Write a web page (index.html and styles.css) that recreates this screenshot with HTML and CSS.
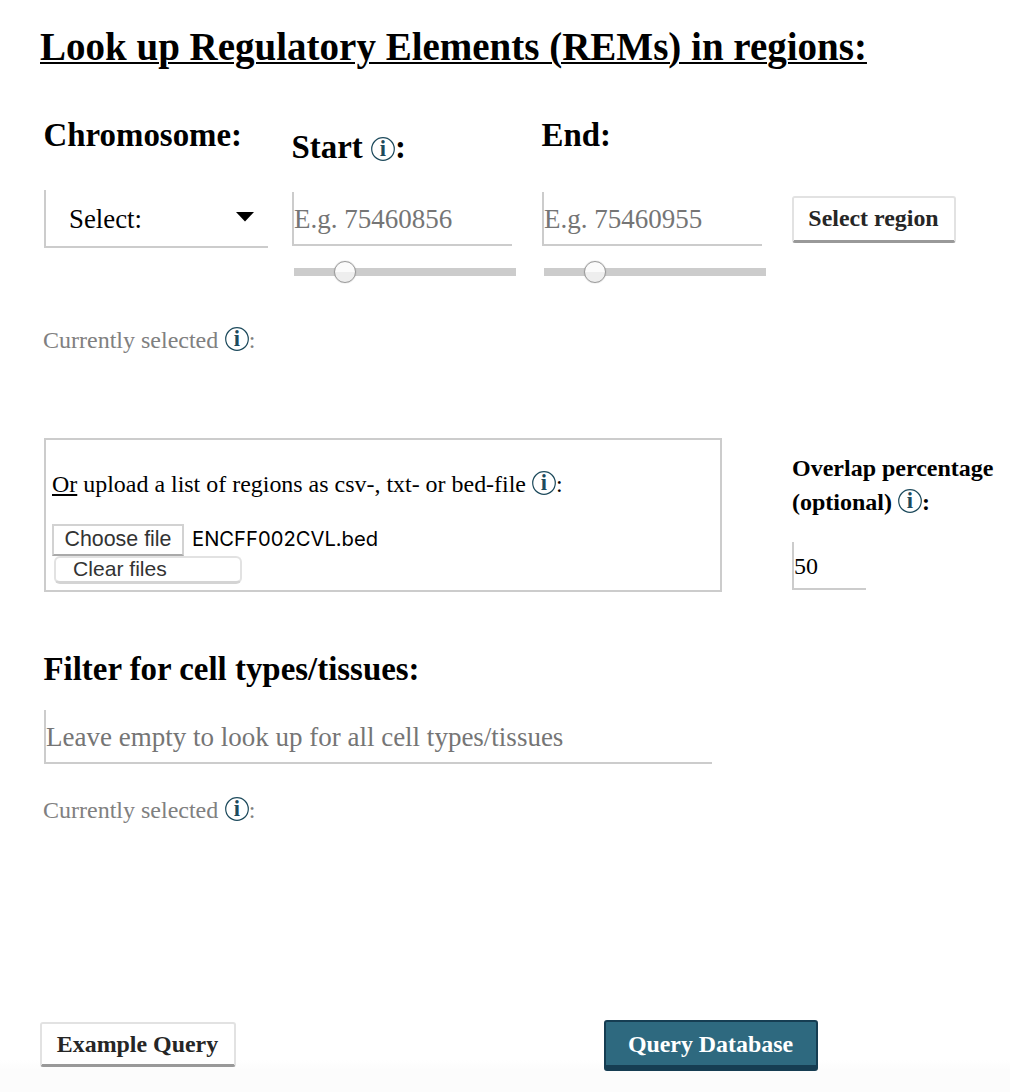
FILE: index.html
```html
<!DOCTYPE html>
<html lang="en">
<head>
<meta charset="utf-8">
<title>Look up Regulatory Elements</title>
<link rel="stylesheet" href="styles.css">
</head>
<body>
<main class="page">
  <h1 class="title">Look up Regulatory Elements (REMs) in regions:</h1>

  <section class="region">
    <div class="col">
      <h3 class="label">Chromosome:</h3>
      <div class="select"><span>Select:</span><svg class="caret" width="18" height="10" viewBox="0 0 18 10"><path d="M0 0H18L9 9.5Z"/></svg></div>
    </div>
    <div class="col">
      <h3 class="label lowered">Start <svg class="info" viewBox="0 0 24 24"><circle cx="12" cy="12" r="11.3"/><text x="12" y="18.6">i</text></svg>:</h3>
      <input class="field" type="text" placeholder="E.g. 75460856">
      <div class="slider"><span class="thumb"></span></div>
    </div>
    <div class="col">
      <h3 class="label">End:</h3>
      <input class="field" type="text" placeholder="E.g. 75460955">
      <div class="slider"><span class="thumb"></span></div>
    </div>
    <button class="btn select-region">Select region</button>
  </section>
  <p class="current">Currently selected <svg class="info" viewBox="0 0 24 24"><circle cx="12" cy="12" r="11.3"/><text x="12" y="18.6">i</text></svg>:</p>

  <section class="upload-row">
    <div class="upload">
      <p class="upload-text"><u>Or</u> upload a list of regions as csv-, txt- or bed-file <svg class="info" viewBox="0 0 24 24"><circle cx="12" cy="12" r="11.3"/><text x="12" y="18.6">i</text></svg>:</p>
      <div class="file"><button class="choose">Choose file</button><span class="filename">ENCFF002CVL.bed</span></div>
      <button class="clear">Clear files</button>
    </div>
    <div class="overlap">
      <h4 class="overlap-label">Overlap percentage<br>(optional) <svg class="info" viewBox="0 0 24 24"><circle cx="12" cy="12" r="11.3"/><text x="12" y="18.6">i</text></svg>:</h4>
      <input class="field percent" type="text" value="50">
    </div>
  </section>

  <section class="filter">
    <h3 class="label">Filter for cell types/tissues:</h3>
    <input class="field tissues" type="text" placeholder="Leave empty to look up for all cell types/tissues">
    <p class="current">Currently selected <svg class="info" viewBox="0 0 24 24"><circle cx="12" cy="12" r="11.3"/><text x="12" y="18.6">i</text></svg>:</p>
  </section>

  <footer class="actions">
    <button class="btn example">Example Query</button>
    <button class="btn primary">Query Database</button>
  </footer>
</main>
</body>
</html>
```

FILE: styles.css
```css
* { box-sizing: border-box; }
body { margin: 0; background: #fff; color: #000; font-family: "Liberation Serif", "Times New Roman", serif; }
h1, h3, h4, p { margin: 0; font-weight: bold; white-space: nowrap; }
button, input { font-family: inherit; margin: 0; }
.page { height: 1092px; padding: 25px 0 0 44px; overflow: hidden; display: flex; flex-direction: column; background: linear-gradient(#fff 1060px, #fcfcfc 1070px); }

.title { margin-left: -4px; height: 92px; font-size: 39px; line-height: 44px; text-decoration: underline; text-decoration-thickness: 2px; text-underline-offset: 2px; }
.label { font-size: 32.9px; line-height: 36px; margin-left: -0.5px; }
.info { width: 24px; height: 24px; vertical-align: -3px; overflow: visible; }
.info circle { fill: none; stroke: #1d4a5c; stroke-width: 1.2; }
.info text { font: bold 22.5px "Liberation Serif", serif; fill: #1d4a5c; text-anchor: middle; }

.region { display: flex; height: 208px; }
.col { width: 250px; display: flex; flex-direction: column; }
.col:first-child { width: 248px; }
.lowered { padding-top: 12px; }
.col .label { height: 75px; flex: none; }
.select { width: 224px; height: 58px; margin-top: -2px; padding: 2px 14px 0 23px; border: solid #ccc; border-width: 0 0 2px 2px; display: flex; align-items: center; justify-content: space-between; font-size: 26.8px; line-height: 30px; }
.caret { margin-bottom: 5px; }
.field { width: 220px; height: 54px; padding: 2px 0 0; border: solid #ccc; border-width: 0 0 2px 2px; border-radius: 0; outline: 0; background: transparent; font-size: 27px; color: #000; }
.field::placeholder { color: #757575; opacity: 1; }
.slider { width: 222px; height: 8px; margin: 22px 0 0 2px; background: #ccc; display: flex; align-items: center; }
.thumb { width: 22px; height: 22px; margin: -1px 0 0 40px; border: 1px solid #999; border-radius: 50%; background: linear-gradient(#fbfbfb 50%, #eee 50%); box-shadow: 0 0 1px #999; }

.btn { border: 2px solid #e2e2e2; border-bottom: 3px solid #999; border-radius: 3px; background: #fff; color: #262626; font-size: 23.9px; font-weight: bold; line-height: 28px; padding: 0 1px 0 0; white-space: nowrap; }
.select-region { width: 164px; height: 47px; margin-top: 79px; padding-bottom: 2px; }
.current { height: 36px; margin-left: -1px; color: #808080; font-size: 24px; font-weight: normal; line-height: 30px; }
.current .info { margin-left: 0.5px; }

.upload-row { display: flex; gap: 70px; height: 212px; margin-top: 77px; }
.upload { width: 678px; height: 154px; border: 2px solid #ccc; padding: 29px 0 0 6px; }
.upload-text { font-size: 23.95px; line-height: 30px; font-weight: normal; }
.file { display: flex; height: 32px; margin-top: 25px; align-items: center; }
.choose { width: 132px; height: 32px; padding: 0 0 2px; border: 2px solid #d2d2d2; border-bottom-color: #aaa; background: #fff; color: #333; font: 21.4px "Liberation Sans", Arial, sans-serif; white-space: nowrap; }
.filename { margin: -3px 0 0 8px; font: 20.2px Inter, sans-serif; }
.clear { display: block; width: 188px; height: 28px; margin-left: 2px; padding: 0 0 2px 17px; border: 2px solid #e2e2e2; border-bottom: 3px solid #d4d4d4; border-radius: 6px; background: #fff; color: #333; text-align: left; font: 21.1px/21px "Liberation Sans", Arial, sans-serif; }
.overlap { padding-top: 13px; }
.overlap-label { font-size: 24px; line-height: 34px; }
.percent { display: block; width: 74px; height: 48px; margin-top: 23px; font-size: 24px; }

.filter { height: 372px; }
.tissues { display: block; width: 668px; margin: 23px 0 31px; }
.filter .label { padding-top: 1px; }
.actions { display: flex; align-items: flex-start; justify-content: space-between; width: 778px; margin-left: -4px; }
.example { width: 196px; height: 45px; }
.primary { width: 214px; height: 51px; margin-top: -2px; background: #2e697f; color: #fff; border: 2px solid #163d52; border-bottom-width: 6px; }
```
